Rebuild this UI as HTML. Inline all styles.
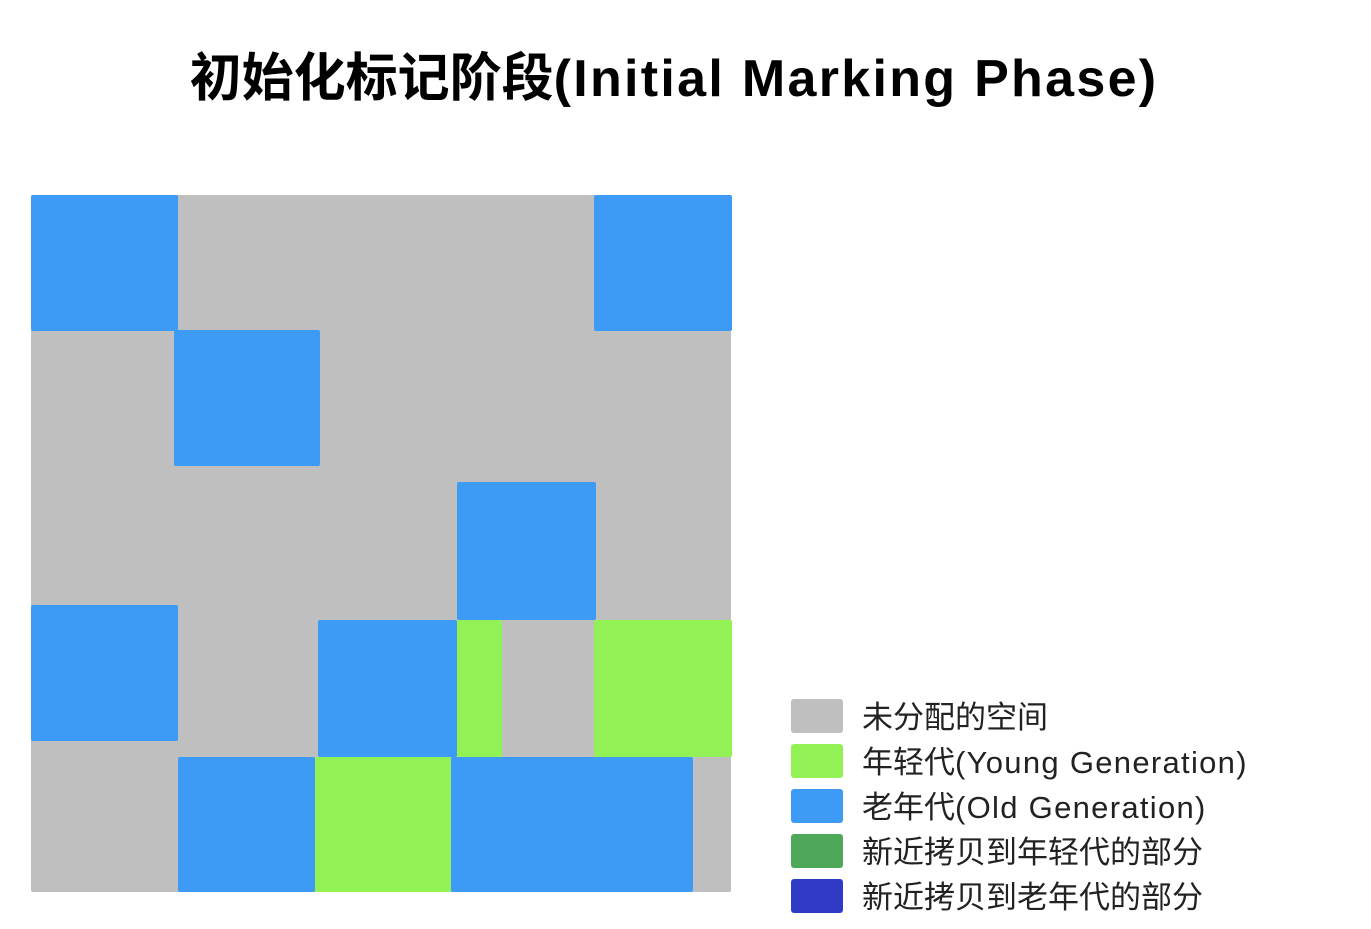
<!DOCTYPE html>
<html><head><meta charset="utf-8"><style>
body{margin:0;width:1371px;height:929px;background:#fff;position:relative;overflow:hidden;font-family:"Liberation Sans","Noto Sans CJK SC",sans-serif}
.t{position:absolute;left:150px;top:44px;width:1048px;text-align:center;font-size:52px;font-weight:bold;color:#000;white-space:nowrap;line-height:70px}
.t span{letter-spacing:2.3px}
.r{position:absolute;border-radius:2px}
.b{background:#3d9af5}.g{background:#92f255}
.s{position:absolute;left:791px;width:52px;height:34px;border-radius:3px}
.l{position:absolute;left:862px;font-size:31px;color:#222;line-height:34px;white-space:nowrap}
.l span{letter-spacing:1.3px}
</style></head><body>
<div class="t">初始化标记阶段<span>(Initial Marking Phase)</span></div>
<div class="r" style="left:31px;top:195px;width:700px;height:697px;background:#bfbfbf"></div>
<div class="r b" style="left:31px;top:195px;width:147px;height:136px"></div>
<div class="r b" style="left:594px;top:195px;width:138px;height:136px"></div>
<div class="r b" style="left:174px;top:330px;width:146px;height:136px"></div>
<div class="r b" style="left:457px;top:482px;width:139px;height:138px"></div>
<div class="r b" style="left:31px;top:605px;width:147px;height:136px"></div>
<div class="r b" style="left:318px;top:620px;width:139px;height:137px"></div>
<div class="r g" style="left:457px;top:620px;width:45px;height:137px"></div>
<div class="r g" style="left:594px;top:620px;width:138px;height:137px"></div>
<div class="r b" style="left:178px;top:757px;width:137px;height:135px"></div>
<div class="r g" style="left:315px;top:757px;width:136px;height:135px"></div>
<div class="r b" style="left:451px;top:757px;width:242px;height:135px"></div>
<div class="s" style="top:699px;background:#bfbfbf"></div><div class="l" style="top:701px">未分配的空间</div>
<div class="s" style="top:744px;background:#92f255"></div><div class="l" style="top:746px">年轻代<span>(Young Generation)</span></div>
<div class="s" style="top:789px;background:#3d9af5"></div><div class="l" style="top:791px">老年代<span>(Old Generation)</span></div>
<div class="s" style="top:834px;background:#4ea85a"></div><div class="l" style="top:836px">新近拷贝到年轻代的部分</div>
<div class="s" style="top:879px;background:#2f3bc4"></div><div class="l" style="top:881px">新近拷贝到老年代的部分</div>
</body></html>
